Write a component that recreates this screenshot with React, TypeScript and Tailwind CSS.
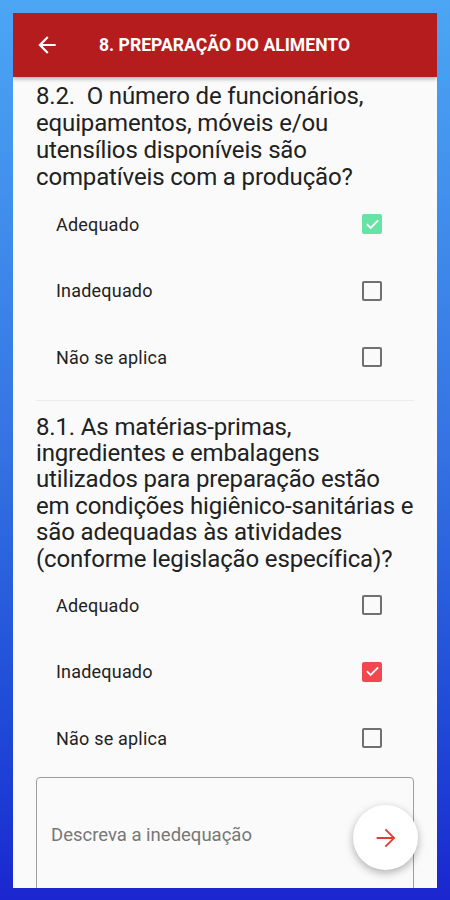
import React from "react";

function Checkbox({ state }: { state: "none" | "green" | "red" }) {
  if (state === "none") {
    return <div className="w-[20px] h-[20px] rounded-[2px] border-2 border-[#707070]" />;
  }
  return (
    <div
      className={`w-[20px] h-[20px] rounded-[2px] flex items-center justify-center ${
        state === "green" ? "bg-[#68e3a6]" : "bg-[#f2474f]"
      }`}
    >
      <svg width="15" height="15" viewBox="0 0 24 24" fill="none">
        <path d="M4 12.5l5 5L20 6.5" stroke="white" strokeWidth="3" strokeLinecap="square" />
      </svg>
    </div>
  );
}

function Option({ label, state }: { label: string; state: "none" | "green" | "red" }) {
  return (
    <div className="h-[66.5px] flex items-center justify-between pl-[20px] pr-[32px]">
      <span className="text-[18px] text-[#222] tracking-[0.2px]">{label}</span>
      <Checkbox state={state} />
    </div>
  );
}

function Question({ lines, lh }: { lines: string[]; lh: string }) {
  return (
    <p className={`text-[24px] ${lh} tracking-[-0.15px] text-[#212121]`}>
      {lines.map((l, i) => (
        <span key={i} className="block whitespace-pre">
          {l}
        </span>
      ))}
    </p>
  );
}

export default function App() {
  return (
    <div
      className="w-[450px] h-[900px] px-[13px] pt-[13px] pb-[12px] bg-gradient-to-b from-[#4ca6f4] via-[#3572e2] to-[#1b25cf]"
      style={{ fontFamily: "Roboto, 'Noto Sans', sans-serif" }}
    >
      <div className="relative w-full h-full bg-[#fafafa] flex flex-col overflow-hidden">
        <div className="h-[64px] shrink-0 bg-[#b41c1e] flex items-center shadow-[0_2px_4px_rgba(0,0,0,0.3)] z-10">
          <svg className="ml-[21px]" width="26" height="26" viewBox="0 0 24 24" fill="white">
            <path d="M20 11H7.83l5.59-5.59L12 4l-8 8 8 8 1.41-1.41L7.83 13H20v-2z" />
          </svg>
          <span className="ml-[39px] text-white font-bold text-[17.6px] tracking-[0px]">
            8. PREPARAÇÃO DO ALIMENTO
          </span>
        </div>
        <div className="px-[23px] pt-[6px] flex flex-col">
          <Question
            lh="leading-[27px]"
            lines={[
              "8.2.  O número de funcionários,",
              "equipamentos, móveis e/ou",
              "utensílios disponíveis são",
              "compatíveis com a produção?",
            ]}
          />
          <Option label="Adequado" state="green" />
          <Option label="Inadequado" state="none" />
          <Option label="Não se aplica" state="none" />
          <div className="mt-[9px] h-px bg-[#ececec]" />
          <div className="mt-[13px]">
            <Question
              lh="leading-[26.4px]"
              lines={[
                "8.1. As matérias-primas,",
                "ingredientes e embalagens",
                "utilizados para preparação estão",
                "em condições higiênico-sanitárias e",
                "são adequadas às atividades",
                "(conforme legislação específica)?",
              ]}
            />
          </div>
          <Option label="Adequado" state="none" />
          <Option label="Inadequado" state="red" />
          <Option label="Não se aplica" state="none" />
          <div className="mt-[6px] h-[130px] rounded-[4px] border border-[#9e9e9e] pl-[14px] pt-[44px]">
            <span className="text-[18.5px] text-[#777]">Descreva a inedequação</span>
          </div>
        </div>
        <div className="absolute left-[340px] top-[792px] w-[65px] h-[65px] rounded-full bg-white shadow-[0_3px_8px_rgba(0,0,0,0.3)] flex items-center justify-center">
          <svg width="28" height="28" viewBox="0 0 24 24" fill="#e53935">
            <path d="M12 4l-1.1 1.1L16.97 11.2H4v1.6h12.97l-6.07 6.1L12 20l8-8z" />
          </svg>
        </div>
      </div>
    </div>
  );
}
